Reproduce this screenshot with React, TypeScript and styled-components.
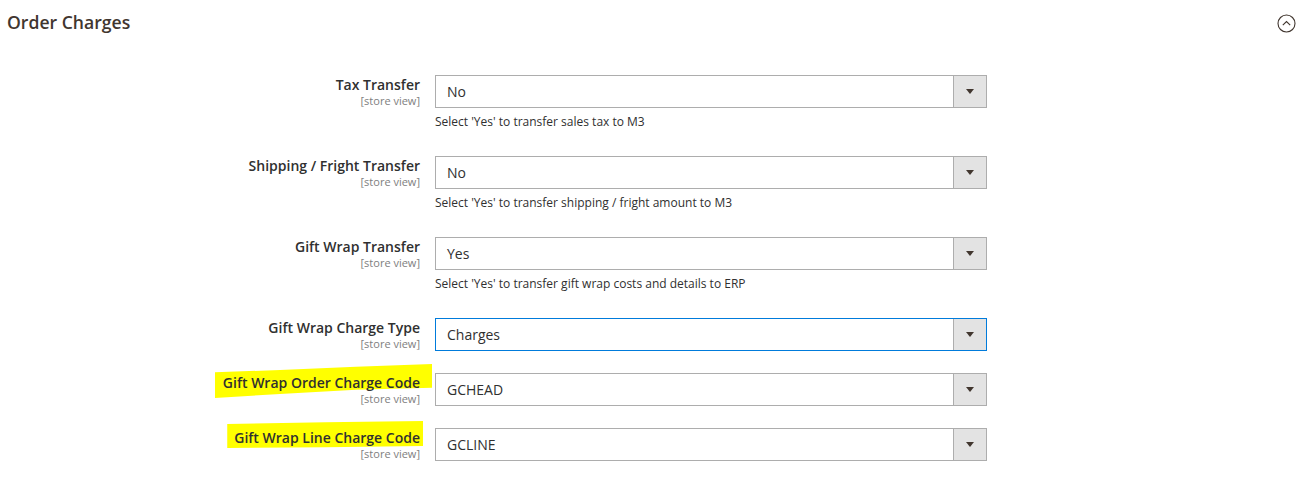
import React from "react";
import styled, { createGlobalStyle, css } from "styled-components";

const Global = createGlobalStyle`
  html, body { margin: 0; padding: 0; background: #fff; }
  body { font-family: "Open Sans", "Liberation Sans", sans-serif; color: #303030; }
  * { box-sizing: border-box; }
`;

const Page = styled.div`
  width: 1312px;
  height: 479px;
  overflow: hidden;
`;

const Header = styled.div`
  display: flex;
  align-items: center;
  justify-content: space-between;
  padding: 10px 16px 10px 7px;
`;

const Title = styled.h2`
  margin: 0;
  font-size: 17.6px;
  line-height: 24px;
  font-weight: 600;
  color: #41362f;
`;

const Toggle = styled.span`
  width: 19px;
  height: 19px;
  display: flex;
  align-items: center;
  justify-content: center;
  margin-top: 2px;
`;

const Fields = styled.div`
  display: flex;
  flex-direction: column;
  gap: 22px;
  margin-top: 31px;
`;

const Row = styled.div`
  display: grid;
  grid-template-columns: 420px 552px;
  column-gap: 15px;
  align-items: start;
`;

const LabelCol = styled.div`
  display: flex;
  flex-direction: column;
  align-items: flex-end;
  text-align: right;
`;

const Label = styled.span`
  font-size: 14px;
  line-height: 19px;
  font-weight: 600;
  color: #303030;
  position: relative;
  z-index: 0;
`;

const Mark = styled.span<{ $shape: string; $box: string }>`
  position: absolute;
  z-index: -1;
  background: #ffff00;
  ${(p) => css`
    inset: ${p.$box};
    clip-path: polygon(${p.$shape});
  `}
`;

const Scope = styled.span`
  position: relative;
  z-index: 1;
  font-size: 11px;
  line-height: 13px;
  color: #808080;
`;

const Control = styled.div`
  display: flex;
  flex-direction: column;
`;

const Select = styled.div<{ $focused?: boolean }>`
  display: flex;
  height: 33px;
  border: 1px solid ${(p) => (p.$focused ? "#007bdb" : "#adadad")};
  background: #fff;
`;

const Value = styled.span`
  flex: 1;
  padding-left: 11px;
  font-size: 14px;
  line-height: 31px;
  color: #303030;
`;

const ArrowBox = styled.span`
  width: 33px;
  background: #e3e3e3;
  border-left: 1px solid #adadad;
  display: flex;
  align-items: center;
  justify-content: center;
`;

const Arrow = styled.span`
  width: 0;
  height: 0;
  border-left: 4px solid transparent;
  border-right: 4px solid transparent;
  border-top: 5px solid #41362f;
`;

const Note = styled.div`
  margin-top: 6px;
  padding-bottom: 4px;
  font-size: 12px;
  line-height: 16px;
  color: #303030;
`;

type Field = {
  label: string;
  value: string;
  note?: string;
  focused?: boolean;
  mark?: { shape: string; box: string };
};

const fields: Field[] = [
  { label: "Tax Transfer", value: "No", note: "Select 'Yes' to transfer sales tax to M3" },
  {
    label: "Shipping / Fright Transfer",
    value: "No",
    note: "Select 'Yes' to transfer shipping / fright amount to M3",
  },
  {
    label: "Gift Wrap Transfer",
    value: "Yes",
    note: "Select 'Yes' to transfer gift wrap costs and details to ERP",
  },
  { label: "Gift Wrap Charge Type", value: "Charges", focused: true },
  {
    label: "Gift Wrap Order Charge Code",
    value: "GCHEAD",
    mark: {
      box: "-9px -12px -6px -8px",
      shape: "0% 24%, 30% 18%, 65% 8%, 100% 0%, 100% 70%, 65% 76%, 30% 88%, 0% 100%",
    },
  },
  {
    label: "Gift Wrap Line Charge Code",
    value: "GCLINE",
    mark: {
      box: "-7px -3px -1px -7px",
      shape: "0% 11%, 50% 5%, 100% 0%, 100% 93%, 50% 97%, 0% 100%",
    },
  },
];

export default function App() {
  return (
    <Page>
      <Global />
      <Header>
        <Title>Order Charges</Title>
        <Toggle>
          <svg width="19" height="19" viewBox="0 0 19 19" fill="none">
            <circle cx="9.5" cy="9.5" r="8.5" stroke="#41362f" strokeWidth="1.1" />
            <path d="M5.8 11.2 L9.5 7.6 L13.2 11.2" stroke="#41362f" strokeWidth="1.1" fill="none" />
          </svg>
        </Toggle>
      </Header>
      <Fields>
        {fields.map((f) => (
          <Row key={f.label}>
            <LabelCol>
              <Label>
                {f.mark && <Mark $box={f.mark.box} $shape={f.mark.shape} />}
                {f.label}
              </Label>
              <Scope>[store view]</Scope>
            </LabelCol>
            <Control>
              <Select $focused={f.focused}>
                <Value>{f.value}</Value>
                <ArrowBox>
                  <Arrow />
                </ArrowBox>
              </Select>
              {f.note && <Note>{f.note}</Note>}
            </Control>
          </Row>
        ))}
      </Fields>
    </Page>
  );
}
